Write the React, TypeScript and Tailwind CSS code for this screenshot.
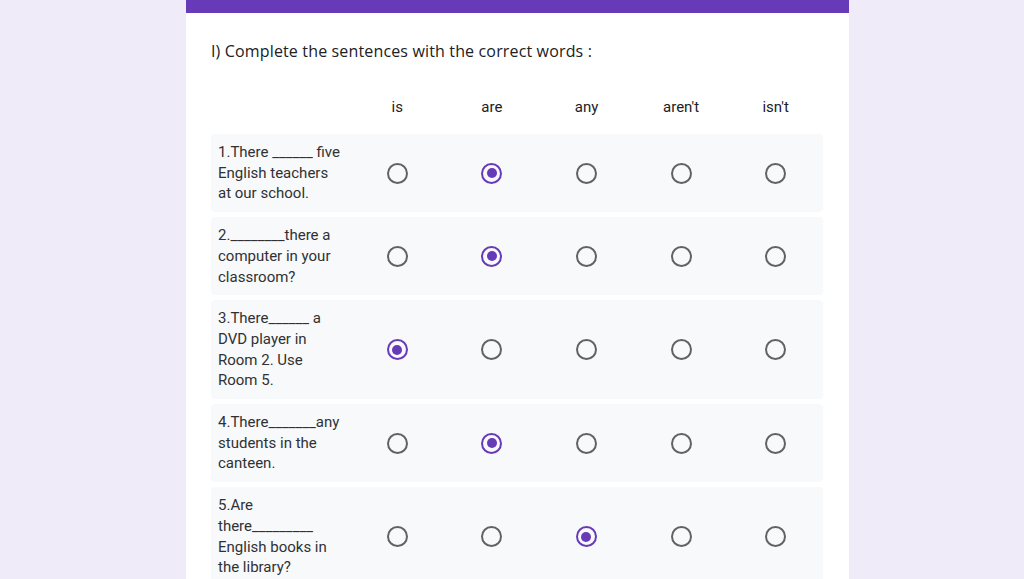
import React from 'react'

const columns = ['is', 'are', 'any', "aren't", "isn't"]

const rows = [
  { lines: ['1.There ______ five', 'English teachers', 'at our school.'], answer: 1 },
  { lines: ['2.________there a', 'computer in your', 'classroom?'], answer: 1 },
  { lines: ['3.There______ a', 'DVD player in', 'Room 2. Use', 'Room 5.'], answer: 0 },
  { lines: ['4.There_______any', 'students in the', 'canteen.'], answer: 1 },
  { lines: ['5.Are', 'there_________', 'English books in', 'the library?'], answer: 2 },
]

function Radio({ checked }: { checked: boolean }) {
  return (
    <div
      className={`w-[21px] h-[21px] rounded-full border-2 flex items-center justify-center ${
        checked ? 'border-[#673ab7]' : 'border-[#5f6368]'
      }`}
    >
      {checked && <div className="w-[10px] h-[10px] rounded-full bg-[#673ab7]" />}
    </div>
  )
}

export default function App() {
  return (
    <div className="h-[579px] bg-[#f0ebf8] pl-[186px] overflow-clip">
      <div className="w-[663px] h-full bg-white flex flex-col overflow-clip">
        <div className="h-[13px] shrink-0 bg-[#673ab7]" />
        <div className="px-[25px]">
          {/* Question title */}
          <div
            className="pt-[26px] text-[16px] leading-6 text-[#202124] tracking-[0.15px]"
            style={{ fontFamily: '"Open Sans", Roboto, sans-serif' }}
          >
            I) Complete the sentences with the correct words :
          </div>

          {/* Grid */}
          <div className="mt-[32px] text-[15px]" style={{ fontFamily: 'Roboto, "Liberation Sans", sans-serif' }}>
            <div className="grid grid-cols-[139px_repeat(5,1fr)] w-[612px] h-6 items-center text-[#202124]">
              <div />
              {columns.map((c) => (
                <div key={c} className="text-center">{c}</div>
              ))}
            </div>

            <div className="mt-[15px] flex flex-col gap-[5px]">
              {rows.map((r, i) => (
                <div
                  key={i}
                  className="grid grid-cols-[139px_repeat(5,1fr)] w-[612px] bg-[#f8f9fa] items-center rounded-sm"
                >
                  <div className="pl-[7px] pt-[8px] pb-[8px] last:pb-0 leading-[20.7px] text-[#303134]">
                    {r.lines.map((l, j) => (
                      <div key={j} className="whitespace-pre">{l}</div>
                    ))}
                  </div>
                  {columns.map((c, k) => (
                    <div key={c} className="flex justify-center">
                      <Radio checked={k === r.answer} />
                    </div>
                  ))}
                </div>
              ))}
            </div>
          </div>
        </div>
      </div>
    </div>
  )
}
